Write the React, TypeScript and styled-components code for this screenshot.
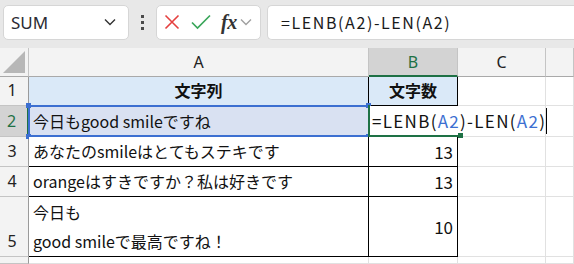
import React from 'react';
import styled, { createGlobalStyle, css } from 'styled-components';

const GlobalStyle = createGlobalStyle`
  html, body {
    margin: 0;
    padding: 0;
    background: #ffffff;
  }
  body {
    width: 574px;
    height: 264px;
    overflow: hidden;
    font-family: "Noto Sans CJK JP", "Noto Sans", sans-serif;
  }
`;

const GREEN = '#1e7145';
const BLUE = '#3c6fd1';
const GRID = '#e1e1e1';
const HEAD_LINE = '#c4c4c4';

const Page = styled.div`
  display: flex;
  flex-direction: column;
  width: 574px;
  height: 264px;
  overflow: hidden;
`;

const Toolbar = styled.div`
  display: flex;
  align-items: center;
  height: 48px;
  padding: 0 0 4px 3px;
  box-sizing: border-box;
  background: #e8e8e8;
`;

const Box = styled.div<{ $w?: number }>`
  display: flex;
  align-items: center;
  height: 35px;
  box-sizing: border-box;
  background: #ffffff;
  border: 1px solid #d6d6d6;
  border-radius: 5px;
  ${p => (p.$w ? css`width: ${p.$w}px;` : css`flex: 1; border-right: none; border-radius: 5px 0 0 5px;`)}
`;

const NameText = styled.span`
  flex: 1;
  padding-left: 7px;
  font-family: "Noto Sans", sans-serif;
  font-size: 17px;
  color: #2b2b33;
`;

const ChevronSlot = styled.div`
  display: flex;
  padding-right: 12px;
`;

const Dots = styled.div`
  display: flex;
  flex-direction: column;
  gap: 3px;
  width: 27px;
  align-items: center;
  span {
    width: 3px;
    height: 3px;
    background: #4a4a4a;
  }
`;

const IconRow = styled.div`
  display: flex;
  align-items: center;
  padding-left: 7px;
`;

const Fx = styled.span`
  font-family: "Liberation Serif", serif;
  font-style: italic;
  font-weight: bold;
  font-size: 20px;
  color: #333333;
  margin: 0 3px 0 10px;
  letter-spacing: -0.5px;
`;

const FormulaText = styled.span`
  padding-left: 13px;
  font-family: "Noto Sans CJK JP", sans-serif;
  font-size: 16px;
  letter-spacing: 1.6px;
  color: #1a1a1a;
`;

const Gap = styled.div<{ $w: number }>`
  width: ${p => p.$w}px;
`;

const Sheet = styled.div`
  flex: 1;
  display: grid;
  grid-template-columns: 29px 340px 89px 88px 1fr;
  grid-template-rows: 29px 29px 31px 30px 30px 60px 1fr;
  background: #ffffff;
`;

type CellProps = {
  $bg?: string;
  $right?: string;
  $bottom?: string;
  $align?: 'left' | 'center' | 'right';
  $valign?: 'center' | 'end';
  $bold?: boolean;
  $front?: boolean;
};

const Cell = styled.div<CellProps>`
  box-sizing: border-box;
  display: flex;
  flex-direction: column;
  justify-content: ${p => (p.$valign === 'center' ? 'center' : 'flex-end')};
  align-items: ${p => (p.$align === 'center' ? 'center' : p.$align === 'right' ? 'flex-end' : 'flex-start')};
  padding: 0 4px;
  background: ${p => p.$bg ?? '#ffffff'};
  border-right: 1px solid ${p => p.$right ?? GRID};
  border-bottom: 1px solid ${p => p.$bottom ?? GRID};
  font-size: 16px;
  font-weight: ${p => (p.$bold ? 700 : 400)};
  color: #111111;
  line-height: 29px;
  white-space: nowrap;
  position: relative;
  ${p => p.$front && css`z-index: 2; overflow: visible;`}
`;

const Num = styled.span`
  font-size: 17px;
`;

const Corner = styled.div`
  box-sizing: border-box;
  background: #f3f3f3;
  border-right: 1px solid ${HEAD_LINE};
  border-bottom: 1px solid #a9a9a9;
  display: flex;
  align-items: flex-end;
  justify-content: flex-end;
  padding: 0 3px 3px 0;
`;

const ColHead = styled.div<{ $sel?: boolean }>`
  box-sizing: border-box;
  display: flex;
  align-items: center;
  justify-content: center;
  font-family: "Noto Sans", sans-serif;
  font-size: 16px;
  background: ${p => (p.$sel ? '#d3d3d3' : '#f3f3f3')};
  color: ${p => (p.$sel ? GREEN : '#222222')};
  border-right: 1px solid ${HEAD_LINE};
  border-bottom: ${p => (p.$sel ? `2px solid ${GREEN}` : '1px solid #a9a9a9')};
`;

const RowHead = styled.div<{ $sel?: boolean }>`
  box-sizing: border-box;
  display: flex;
  align-items: flex-end;
  justify-content: center;
  padding-right: 4px;
  font-family: "Noto Sans", sans-serif;
  font-size: 16px;
  line-height: 29px;
  background: ${p => (p.$sel ? '#d3d3d3' : '#f3f3f3')};
  color: ${p => (p.$sel ? GREEN : '#222222')};
  border-right: ${p => (p.$sel ? `2px solid ${GREEN}` : '1px solid #9a9a9a')};
  border-bottom: 1px solid ${HEAD_LINE};
`;

const RefFrame = styled.div`
  position: absolute;
  inset: -1px -2px -1px -1px;
  border: 2px solid ${BLUE};
  pointer-events: none;
`;

const Handle = styled.span<{ $c: string; $x: 'l' | 'r'; $y: 't' | 'b' }>`
  position: absolute;
  width: 5px;
  height: 5px;
  background: ${p => p.$c};
  ${p => (p.$x === 'l' ? 'left: -3px;' : 'right: -3px;')}
  ${p => (p.$y === 't' ? 'top: -3px;' : 'bottom: -3px;')}
`;

const ActiveFrame = styled.div`
  position: absolute;
  left: -1px;
  top: -1px;
  bottom: -1px;
  width: 90px;
  border-left: 2px solid ${GREEN};
  border-bottom: 2px solid ${GREEN};
  pointer-events: none;
`;

const EditText = styled.span`
  font-size: 17px;
  letter-spacing: 1.3px;
  margin-left: -1px;
  padding-right: 0;
  border-right: 1px solid #000000;
  line-height: 26px;
  margin-bottom: 2px;
  color: #111111;
  b {
    font-weight: 400;
    color: ${BLUE};
  }
`;

const Chevron = ({ color = '#444' }: { color?: string }) => (
  <svg width="12" height="8" viewBox="0 0 12 8">
    <polyline points="1,1.5 6,6.5 11,1.5" fill="none" stroke={color} strokeWidth="1.4" />
  </svg>
);

const Triangle = () => (
  <svg width="22" height="22" viewBox="0 0 22 22">
    <polygon points="22,0 22,22 0,22" fill="#b7b7b7" />
  </svg>
);

const BLACK = '#000000';

export default function App() {
  return (
    <>
      <GlobalStyle />
      <Page>
        <Toolbar>
          <Box $w={126}>
            <NameText>SUM</NameText>
            <ChevronSlot>
              <Chevron color="#333" />
            </ChevronSlot>
          </Box>
          <Dots>
            <span />
            <span />
            <span />
          </Dots>
          <Box $w={105}>
            <IconRow>
              <svg width="16" height="16" viewBox="0 0 16 16">
                <path d="M1.5 1.5 L14.5 14.5 M14.5 1.5 L1.5 14.5" stroke="#e5403f" strokeWidth="1.6" fill="none" />
              </svg>
              <Gap $w={11} />
              <svg width="20" height="16" viewBox="0 0 20 16">
                <polyline points="1,8.5 6.5,14 19,1.5" stroke="#3aa65a" strokeWidth="1.7" fill="none" />
              </svg>
              <Fx>fx</Fx>
              <Chevron color="#a0a0a0" />
            </IconRow>
          </Box>
          <Gap $w={6} />
          <Box>
            <FormulaText>=LENB(A2)-LEN(A2)</FormulaText>
          </Box>
        </Toolbar>

        <Sheet>
          {/* column headers */}
          <Corner>
            <Triangle />
          </Corner>
          <ColHead>A</ColHead>
          <ColHead $sel>B</ColHead>
          <ColHead>C</ColHead>
          <ColHead />

          {/* row 1 */}
          <RowHead>1</RowHead>
          <Cell $bg="#dae9f8" $right={BLACK} $bottom={BLACK} $align="center" $bold>
            文字列
          </Cell>
          <Cell $bg="#dae9f8" $right={BLACK} $bottom={BLACK} $align="center" $bold>
            文字数
          </Cell>
          <Cell />
          <Cell />

          {/* row 2 */}
          <RowHead $sel>2</RowHead>
          <Cell $bg="#d9e1f2" $right={BLACK} $bottom={BLACK}>
            今日もgood smileですね
            <RefFrame />
            <Handle $c={BLUE} $x="l" $y="t" />
            <Handle $c={BLUE} $x="r" $y="t" />
            <Handle $c={BLUE} $x="l" $y="b" />
            <Handle $c={BLUE} $x="r" $y="b" />
          </Cell>
          <Cell $right="transparent" $bottom={BLACK} $front>
            <EditText>
              =LENB(<b>A2</b>)-LEN(<b>A2</b>)
            </EditText>
            <ActiveFrame>
              <Handle $c={GREEN} $x="r" $y="b" />
            </ActiveFrame>
          </Cell>
          <Cell />
          <Cell />

          {/* row 3 */}
          <RowHead>3</RowHead>
          <Cell $right={BLACK} $bottom={BLACK}>
            あなたのsmileはとてもステキです
          </Cell>
          <Cell $right={BLACK} $bottom={BLACK} $align="right">
            <Num>13</Num>
          </Cell>
          <Cell />
          <Cell />

          {/* row 4 */}
          <RowHead>4</RowHead>
          <Cell $right={BLACK} $bottom={BLACK}>
            orangeはすきですか？私は好きです
          </Cell>
          <Cell $right={BLACK} $bottom={BLACK} $align="right">
            <Num>13</Num>
          </Cell>
          <Cell />
          <Cell />

          {/* row 5 */}
          <RowHead>5</RowHead>
          <Cell $right={BLACK} $bottom={BLACK}>
            <span>今日も</span>
            <span>good smileで最高ですね！</span>
          </Cell>
          <Cell $right={BLACK} $bottom={BLACK} $align="right" $valign="center">
            <Num>10</Num>
          </Cell>
          <Cell />
          <Cell />

          {/* row 6 */}
          <RowHead />
          <Cell />
          <Cell />
          <Cell />
          <Cell />
        </Sheet>
      </Page>
    </>
  );
}
